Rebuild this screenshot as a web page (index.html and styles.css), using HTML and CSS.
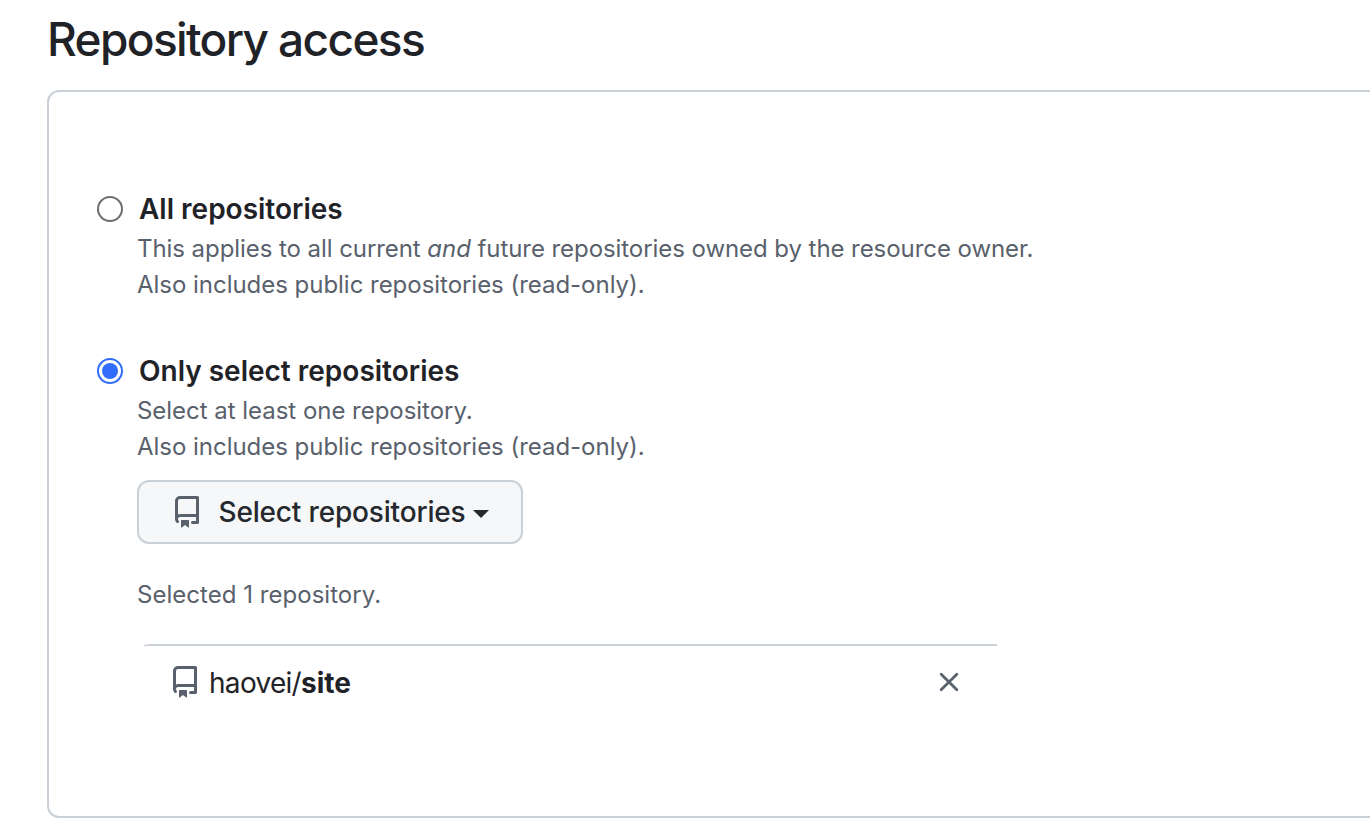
FILE: index.html
```html
<!DOCTYPE html>
<html lang="en">
<head>
<meta charset="utf-8">
<title>Repository access</title>
<link rel="stylesheet" href="styles.css">
</head>
<body>
<main class="page">
  <h1 class="title">Repository access</h1>
  <section class="box">
    <div class="option">
      <span class="radio"></span>
      <div class="body">
        <h2 class="label">All repositories</h2>
        <p class="note wide">This applies to all current <em>and</em> future repositories owned by the resource owner.</p>
        <p class="note">Also includes public repositories (read-only).</p>
      </div>
    </div>
    <div class="option second">
      <span class="radio checked"></span>
      <div class="body">
        <h2 class="label">Only select repositories</h2>
        <p class="note">Select at least one repository.</p>
        <p class="note">Also includes public repositories (read-only).</p>
        <button class="select" type="button">
          <svg class="repo" viewBox="0 0 16 16"><path d="M2 2.5A2.5 2.5 0 0 1 4.5 0h8.75a.75.75 0 0 1 .75.75v12.5a.75.75 0 0 1-.75.75h-2.5a.75.75 0 0 1 0-1.5h1.75v-2h-8a1 1 0 0 0-.714 1.7.75.75 0 1 1-1.072 1.05A2.495 2.495 0 0 1 2 11.5Zm10.5-1h-8a1 1 0 0 0-1 1v6.708A2.486 2.486 0 0 1 4.5 9h8ZM5 12.25a.25.25 0 0 1 .25-.25h3.5a.25.25 0 0 1 .25.25v3.25a.25.25 0 0 1-.4.2l-1.45-1.087a.249.249 0 0 0-.3 0L5.4 15.7a.25.25 0 0 1-.4-.2Z"/></svg>
          <span class="select-text">Select repositories</span>
          <span class="caret"></span>
        </button>
        <p class="note count">Selected 1 repository.</p>
        <div class="row">
          <svg class="repo" viewBox="0 0 16 16"><path d="M2 2.5A2.5 2.5 0 0 1 4.5 0h8.75a.75.75 0 0 1 .75.75v12.5a.75.75 0 0 1-.75.75h-2.5a.75.75 0 0 1 0-1.5h1.75v-2h-8a1 1 0 0 0-.714 1.7.75.75 0 1 1-1.072 1.05A2.495 2.495 0 0 1 2 11.5Zm10.5-1h-8a1 1 0 0 0-1 1v6.708A2.486 2.486 0 0 1 4.5 9h8ZM5 12.25a.25.25 0 0 1 .25-.25h3.5a.25.25 0 0 1 .25.25v3.25a.25.25 0 0 1-.4.2l-1.45-1.087a.249.249 0 0 0-.3 0L5.4 15.7a.25.25 0 0 1-.4-.2Z"/></svg>
          <span class="name">haovei/<b>site</b></span>
          <svg class="close" viewBox="0 0 20 20"><path d="M2.2 2.2L17.8 17.8M17.8 2.2L2.2 17.8"/></svg>
        </div>
      </div>
    </div>
  </section>
</main>
</body>
</html>
```
FILE: styles.css
```css
* { box-sizing: border-box; }
body { margin: 0; background: #fff; color: #1f2328; font-family: Inter, sans-serif; overflow: hidden; }
h1, h2, p { margin: 0; white-space: nowrap; }
.page { width: 1400px; height: 840px; padding: 9px 0 0 47px; overflow: hidden; }
.title { font-size: 46px; font-weight: 450; line-height: 60px; letter-spacing: -1.63px; }
.box { margin-top: 21px; height: 728px; border: 2px solid #cad0d8; border-radius: 12px; padding: 98px 0 0 48px; }
.option { display: flex; gap: 14px; }
.second { margin-top: 42px; }
.radio { width: 26px; height: 26px; margin-top: 6px; border: 2px solid #6e6e6e; border-radius: 50%; display: grid; place-items: center; }
.checked { border-color: #316dfa; }
.checked::after { content: ""; width: 16px; height: 16px; border-radius: 50%; background: #316dfa; }
.body { padding-bottom: 7px; }
.label { height: 40px; margin: 0 0 1px 2px; font-size: 28px; font-weight: 600; line-height: 38px; }
.note { font-size: 24px; font-weight: 430; line-height: 36px; color: #59616c; letter-spacing: -.03px; }
.wide { letter-spacing: -.065px; }
.select { display: flex; align-items: center; width: 386px; height: 64px; margin-top: 15px; padding: 0 0 0 32px; border: 2px solid #cad0d8; border-radius: 12px; background: #f6f7f9; color: #25292e; font: 500 28px/40px Inter, sans-serif; }
.repo { width: 32px; height: 32px; fill: #59616c; flex: none; }
.select-text { margin-left: 15.5px; white-space: nowrap; letter-spacing: -.17px; }
.caret { margin: 4px 0 0 7px; border: 8px solid transparent; border-top-color: #25292e; border-bottom: 0; }
.count { margin-top: 33px; letter-spacing: .03px; }
.row { display: flex; align-items: center; width: 854px; height: 76px; margin: 31px 0 0 6px; padding: 0 38px 2px 26px; border-top: 2px solid #cad0d8; border-top-left-radius: 10px 2px; }
.name { padding-top: 2px; margin-left: 8px; font-size: 28px; font-weight: 430; white-space: nowrap; letter-spacing: -.7px; }
.name b { font-weight: 650; letter-spacing: 0; }
.close { width: 20px; height: 20px; margin-left: auto; fill: none; stroke: #59616c; stroke-width: 2.8; stroke-linecap: round; }
```
